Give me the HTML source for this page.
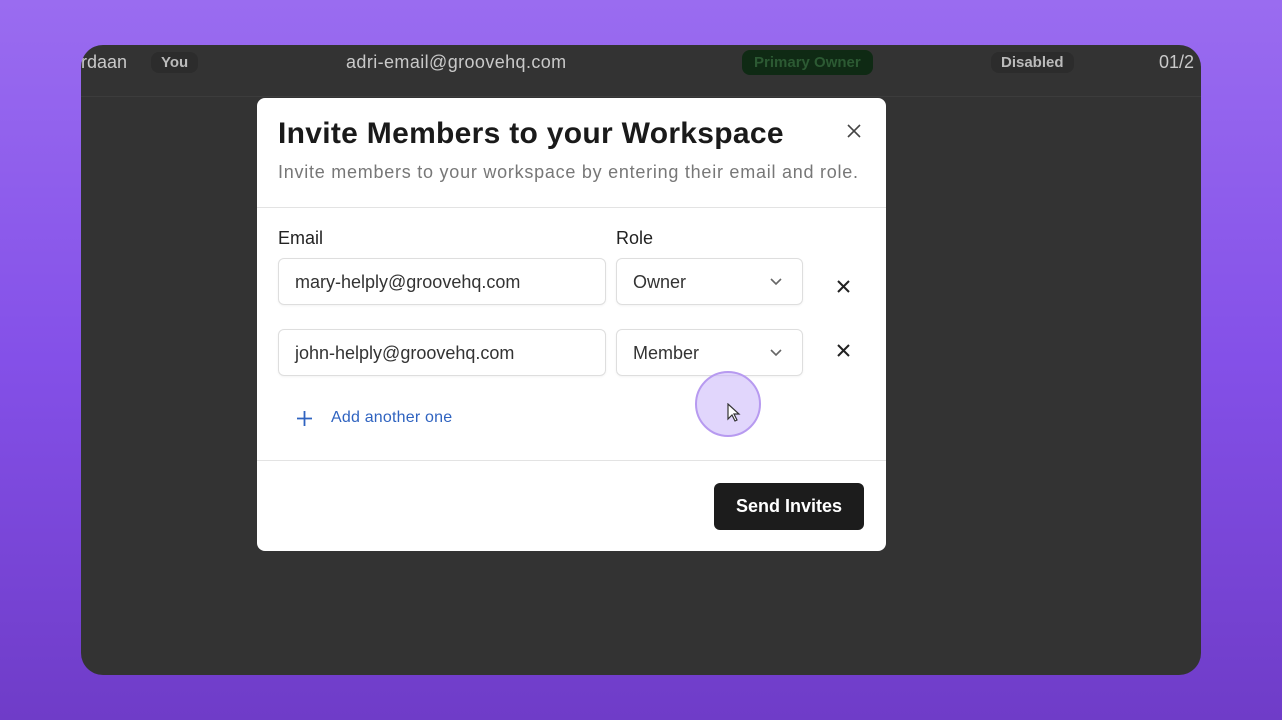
<!DOCTYPE html>
<html><head><style>
*{margin:0;padding:0;box-sizing:border-box}
body{width:1282px;height:720px;overflow:hidden;font-family:"Liberation Sans",sans-serif;background:linear-gradient(180deg,#9a6cf0 0%,#8450e8 50%,#6f3cc8 100%);position:relative}
.panel{position:absolute;left:81px;top:45px;width:1120px;height:630px;background:#333;border-radius:22px;overflow:hidden}
.row{position:absolute;top:0;left:0;right:0;height:52px;border-bottom:1px solid #3c3c3c;color:#c9c9c9;font-size:18px}
.row span{position:absolute;top:7px}
.pill{background:#2c2c2c;border-radius:8px;padding:2px 10px;font-weight:bold;font-size:15px;color:#bbb}
.modal{position:absolute;left:257px;top:98px;width:629px;height:453px;background:#fff;border-radius:8px}
h1{position:absolute;left:21px;top:19px;font-size:30px;font-weight:bold;color:#1a1a1a;letter-spacing:0.3px}
.sub{position:absolute;left:21px;top:64px;font-size:18px;color:#777;letter-spacing:0.75px}
.hr{position:absolute;left:0;right:0;height:1px;background:#e3e3e3}
.lbl{position:absolute;top:130px;font-size:18px;color:#222}
.inp{position:absolute;height:47px;border:1px solid #dedede;border-radius:6px;font-size:18px;color:#333;padding:13px 16px;box-shadow:0 1px 2px rgba(0,0,0,.05)}
</style></head><body>
<div class="panel">
<div class="row">
<span style="left:0">rdaan</span>
<span class="pill" style="left:70px;top:7px">You</span>
<span style="left:265px;letter-spacing:0.4px">adri-email@groovehq.com</span>
<span class="pill" style="left:661px;top:5px;background:#0f2a14;color:#2c5a33;padding:4px 12px">Primary Owner</span>
<span class="pill" style="left:910px;top:7px">Disabled</span>
<span style="left:1078px">01/2</span>
</div>
</div>
<div class="modal">
<h1>Invite Members to your Workspace</h1>
<svg style="position:absolute;left:590px;top:26px" width="14" height="14"><path d="M1 1L13 13M13 1L1 13" stroke="#444" stroke-width="1.6"/></svg>
<div class="sub">Invite members to your workspace by entering their email and role.</div>
<div class="hr" style="top:109px"></div>
<div class="lbl" style="left:21px">Email</div>
<div class="lbl" style="left:359px">Role</div>
<div class="inp" style="left:21px;top:160px;width:328px">mary-helply@groovehq.com</div>
<div class="inp" style="left:359px;top:160px;width:187px">Owner<svg style="position:absolute;right:20px;top:19px" width="12" height="8"><path d="M1 1L6 6L11 1" stroke="#666" stroke-width="1.6" fill="none"/></svg></div>
<svg style="position:absolute;left:580px;top:182px" width="13" height="13"><path d="M1 1L12 12M12 1L1 12" stroke="#222" stroke-width="2"/></svg>
<div class="inp" style="left:21px;top:231px;width:328px">john-helply@groovehq.com</div>
<div class="inp" style="left:359px;top:231px;width:187px">Member<svg style="position:absolute;right:20px;top:19px" width="12" height="8"><path d="M1 1L6 6L11 1" stroke="#666" stroke-width="1.6" fill="none"/></svg></div>
<svg style="position:absolute;left:580px;top:246px" width="13" height="13"><path d="M1 1L12 12M12 1L1 12" stroke="#222" stroke-width="2"/></svg>
<svg style="position:absolute;left:40px;top:313px" width="15" height="15"><path d="M7.5 0V15M0 7.5H15" stroke="#2f63c0" stroke-width="1.8"/></svg>
<div style="position:absolute;left:74px;top:311px;font-size:16px;color:#2f63c0;letter-spacing:0.2px">Add another one</div>
<div class="hr" style="top:362px"></div>
<div style="position:absolute;left:457px;top:385px;width:150px;height:47px;background:#1c1c1c;border-radius:6px;color:#fff;font-size:18px;font-weight:bold;text-align:center;line-height:47px">Send Invites</div>
<div style="position:absolute;left:438px;top:273px;width:66px;height:66px;border-radius:50%;background:rgba(200,180,250,.55);border:2px solid #b79af0"></div>
<svg style="position:absolute;left:470px;top:305px" width="14" height="20"><path d="M1 1L1 16L5 12L8 18L10 17L7 11L12 11Z" fill="#fff" stroke="#333" stroke-width="1.2"/></svg>
</div>
</body></html>
